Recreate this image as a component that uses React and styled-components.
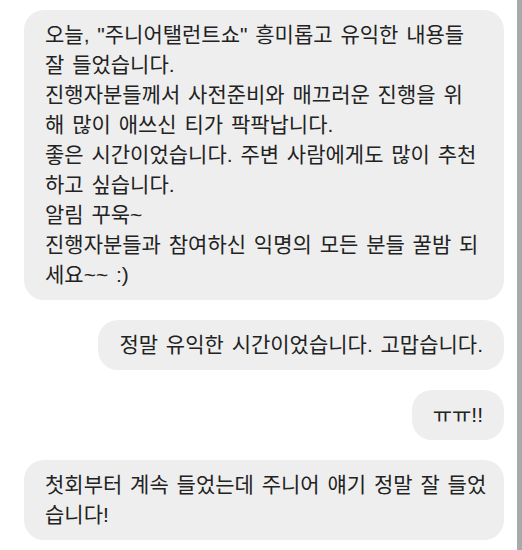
import React from 'react';
import styled, { createGlobalStyle } from 'styled-components';

const GlobalStyle = createGlobalStyle`
  html, body {
    margin: 0;
    padding: 0;
    background: #ffffff;
  }
  body {
    font-family: "Liberation Sans", "Noto Sans CJK KR", sans-serif;
  }
`;

const Frame = styled.div`
  display: flex;
  width: 522px;
  height: 550px;
  overflow: hidden;
`;

const MessageList = styled.div`
  flex: 1;
  display: flex;
  flex-direction: column;
  gap: 20px;
  padding: 10px 13px 0 24px;
`;

const ScrollRail = styled.div`
  width: 5px;
  flex-shrink: 0;
  background: #a9a9a9;
`;

const Bubble = styled.div`
  align-self: ${(p) => (p.$full ? 'stretch' : p.$mine ? 'flex-end' : 'flex-start')};
  max-width: 480px;
  box-sizing: border-box;
  padding: 10px 21px;
  border-radius: 20px;
  background: #eeeeee;
  color: #222222;
  font-size: 21px;
  line-height: 30px;
  word-spacing: 2px;
  white-space: pre;
  overflow: hidden;
`;

// lines are kept as they wrap in the chat window
const messages = [
  {
    mine: false,
    lines: [
      '오늘, "주니어탤런트쇼" 흥미롭고 유익한 내용들',
      '잘 들었습니다.',
      '진행자분들께서 사전준비와 매끄러운 진행을 위',
      '해 많이 애쓰신 티가 팍팍납니다.',
      '좋은 시간이었습니다. 주변 사람에게도 많이 추천',
      '하고 싶습니다.',
      '알림 꾸욱~',
      '진행자분들과 참여하신 익명의 모든 분들 꿀밤 되',
      '세요~~ :)',
    ],
  },
  { mine: true, lines: ['정말 유익한 시간이었습니다. 고맙습니다.'] },
  { mine: true, lines: ['ㅠㅠ!!'] },
  {
    mine: false,
    lines: ['첫회부터 계속 들었는데 주니어 얘기 정말 잘 들었', '습니다!'],
  },
];

const App = () => (
  <>
    <GlobalStyle />
    <Frame>
      <MessageList>
        {messages.map((m, i) => (
          <Bubble key={i} $mine={m.mine} $full={m.lines.length > 1}>
            {m.lines.join('\n')}
          </Bubble>
        ))}
      </MessageList>
      <ScrollRail />
    </Frame>
  </>
);

export default App;
